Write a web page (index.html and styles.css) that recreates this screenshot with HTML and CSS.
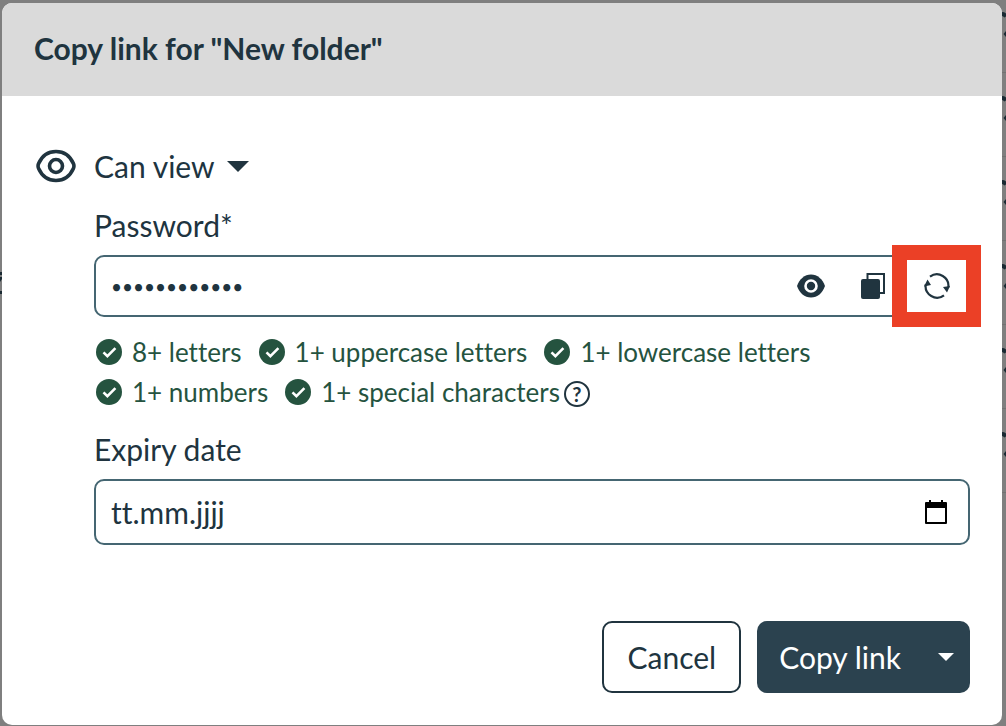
FILE: index.html
```html
<!DOCTYPE html>
<html lang="en">
<head>
<meta charset="utf-8">
<meta name="viewport" content="width=device-width, initial-scale=1">
<title>Copy link</title>
<link rel="stylesheet" href="styles.css">
</head>
<body>
<svg width="0" height="0" class="defs" aria-hidden="true">
  <symbol id="check" viewBox="0 0 26 26"><circle cx="13" cy="13" r="13" fill="currentColor"/><path d="M7.500 13.300l3.900 3.900 8-8" fill="none" stroke="#fff" stroke-width="2.600"/></symbol>
  <symbol id="row-end" viewBox="0 0 4 84"><path d="M0 14q2.500 0 4 2.500" fill="none" stroke="#1a2a33" stroke-width="4"/><path d="M4 31l-2.500 3 2.500 3z" fill="#1a2a33"/><path d="M0 72.500h4" stroke="#727272"/></symbol>
</svg>
<div class="backdrop" aria-hidden="true">
  <div class="edge edge-left">
    <svg width="2" height="24" viewBox="0 0 2 24"><path d="M0 1h2v3H0zM0 6h2v2l-2 3zM0 20h2v3H0z" fill="#1a2a33"/></svg>
  </div>
  <div class="edge edge-right">
    <svg width="4" height="84"><use href="#row-end"/></svg>
    <svg width="4" height="84"><use href="#row-end"/></svg>
    <svg width="4" height="84"><use href="#row-end"/></svg>
    <svg width="4" height="84"><use href="#row-end"/></svg>
    <svg width="4" height="84"><use href="#row-end"/></svg>
    <svg width="4" height="84"><use href="#row-end"/></svg>
  </div>
</div>
<main class="modal" role="dialog" aria-labelledby="title">
  <header class="modal-header"><h1 id="title">Copy link for "New folder"</h1></header>
  <form class="modal-body">
    <button type="button" class="role">
      <svg width="40" height="34" viewBox="0 0 40 34" fill="none" stroke="currentColor" stroke-width="3.600"><path d="M20 2.500C11 2.500 5.500 8 2.600 14.500q-1.100 2.500 0 5C5.500 26 11 31.500 20 31.500s14.500-5.500 17.400-12q1.100-2.500 0-5C34.500 8 29 2.500 20 2.500z"/><circle cx="20" cy="17" r="6.500"/></svg>
      <span>Can view</span>
      <svg class="role-caret" width="22" height="11" viewBox="0 0 22 11"><path d="M0 0h22L11 11z" fill="currentColor"/></svg>
    </button>
    <div class="fields">
      <label for="password">Password*</label>
      <div class="control password">
        <input id="password" type="password" value="Abcdef12345!">
        <button type="button" aria-label="Show password"><svg width="28" height="24" viewBox="0 0 28 24"><path d="M14 .5C7.500.5 2.500 5 0 12c2.500 7 7.500 11.500 14 11.500S25.500 19 28 12C25.500 5 20.500.5 14 .5z" fill="currentColor"/><circle cx="14" cy="12" r="5.500" fill="currentColor" stroke="#fff" stroke-width="2.600"/></svg></button>
        <button type="button" aria-label="Copy password"><svg width="24" height="26" viewBox="0 0 24 26"><path d="M2 6h15q2 0 2 2v16q0 2-2 2H2q-2 0-2-2V8q0-2 2-2z" fill="currentColor"/><path d="M6.500 6V1H23v19h-4" fill="none" stroke="currentColor" stroke-width="2"/></svg></button>
        <button type="button" class="generate" aria-label="Generate password"><svg width="28" height="28" viewBox="0 0 28 28"><path d="M7 4.700A11.500 11.500 0 0 1 25.300 15.500M21 23.300A11.500 11.500 0 0 1 2.700 12.500" fill="none" stroke="currentColor" stroke-width="2.200"/><path d="M20 15l7-1-3 6.500zM8 13l-7 1.500L4.500 7.500z" fill="currentColor"/></svg></button>
      </div>
      <ul class="rules">
        <li><svg width="26" height="26"><use href="#check"/></svg>8+ letters</li>
        <li><svg width="26" height="26"><use href="#check"/></svg>1+ uppercase letters</li>
        <li><svg width="26" height="26"><use href="#check"/></svg>1+ lowercase letters</li>
        <li><svg width="26" height="26"><use href="#check"/></svg>1+ numbers</li>
        <li><svg width="26" height="26"><use href="#check"/></svg>1+ special characters<button type="button" class="help" aria-label="Help">?</button></li>
      </ul>
      <label for="expiry">Expiry date</label>
      <div class="control date">
        <input id="expiry" type="text" placeholder="tt.mm.jjjj">
        <button type="button" aria-label="Choose date"><svg width="22" height="24" viewBox="0 0 22 24"><path d="M1 3h20v20H1z" fill="none" stroke="#000" stroke-width="2" stroke-linejoin="round"/><path d="M0 3h22v5H0zM4 0h2v4H4zM16 0h2v4h-2z"/></svg></button>
      </div>
    </div>
  </form>
  <footer class="modal-footer">
    <button type="button" class="btn">Cancel</button>
    <div class="split">
      <button type="button" class="btn primary">Copy link</button>
      <button type="button" class="btn primary more" aria-label="More options"><svg width="16" height="8" viewBox="0 0 16 8"><path d="M0 0h16L8 8z" fill="currentColor"/></svg></button>
    </div>
  </footer>
</main>
</body>
</html>
```
FILE: styles.css
```css
* { box-sizing: border-box; }
body {
  margin: 0;
  min-height: 100vh;
  display: flex;
  padding: 3px 4px 1px 2px;
  background: #7f7f7f;
  color: #20343f;
  font: 30px/36px Lato, "Liberation Sans", sans-serif;
  font-variant-ligatures: none;
}
button, input { font: inherit; font-variant-ligatures: none; color: inherit; background: none; border: 0; padding: 0; margin: 0; }
button { display: flex; align-items: center; justify-content: center; }
svg { display: block; flex: none; }
.defs { position: absolute; }
.edge { position: absolute; top: 0; }
.edge-left { left: 0; padding-top: 271px; }
.edge-right { right: 0; }
.modal {
  position: relative;
  flex: 1;
  display: flex;
  flex-direction: column;
  background: #fff;
  border-radius: 10px;
}
.modal-header { padding: 27px 32px 30px; background: #dadada; border-radius: 10px 10px 0 0; }
h1 { margin: 0; font-size: 30px; line-height: 36px; font-weight: 700; }
.modal-body { flex: 1; padding: 52px 32px 0 34px; }
.role { gap: 18px; padding-bottom: 2px; }
.role-caret { margin-left: -6px; }
.fields { padding-left: 58px; }
.fields label { display: block; margin-top: 21px; }
.control {
  position: relative;
  display: flex;
  align-items: center;
  margin-top: 12px;
  border: 2px solid #456672;
  border-radius: 10px;
}
.control input { flex: 1; min-width: 0; height: 58px; padding-left: 15px; outline: 0; }
.date input { height: 62px; }
.date input::placeholder { color: inherit; opacity: 1; }
.password { gap: 36px; padding-right: 83px; }
.password input { font-size: 19px; }
.generate {
  position: absolute;
  top: -12px;
  right: -13px;
  width: 89px;
  height: 82px;
  background: #fff;
  border: 15px solid #eb4026;
}
.date { padding-right: 21px; }
.rules {
  display: flex;
  flex-wrap: wrap;
  gap: 4px 17px;
  margin: 17px 0 0;
  padding: 0 2px;
  list-style: none;
  font-size: 26px;
  color: #25533f;
}
.rules li { display: flex; align-items: center; }
.rules svg { margin-right: 10px; }
.help {
  width: 26px;
  height: 26px;
  margin: 4px 0 0 4px;
  border: 2px solid #20343f;
  border-radius: 50%;
  color: #20343f;
  font-size: 20px;
  line-height: 20px;
  font-weight: 700;
}
.modal-footer { display: flex; justify-content: flex-end; gap: 16px; padding: 0 32px; margin-bottom: 32px; }
.btn { height: 72px; padding: 0 23px; border: 2px solid #20343f; border-radius: 10px; }
.split { display: flex; }
.btn.primary { padding: 0 22px; background: #2b424f; border: 0; color: #fff; border-radius: 10px 0 0 10px; }
.btn.more { padding: 0 16px 0 15px; border-radius: 0 10px 10px 0; }
```
